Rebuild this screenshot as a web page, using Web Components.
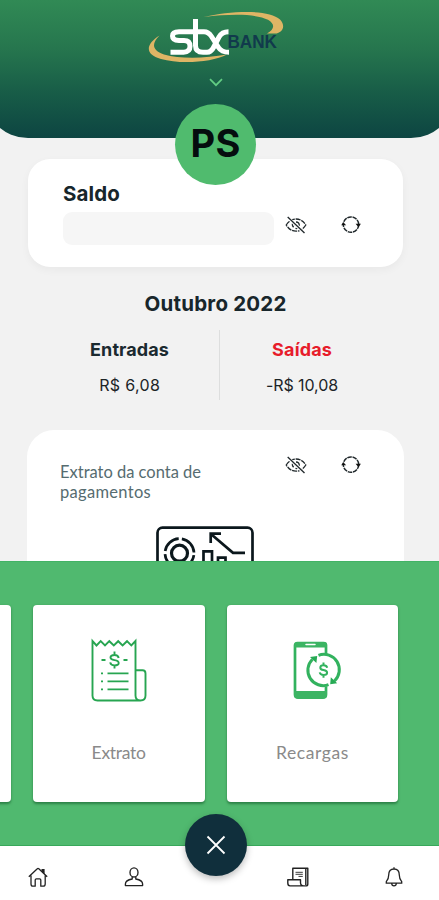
<!DOCTYPE html>
<html lang="pt-BR">
<head>
<meta charset="utf-8">
<title>STX Bank</title>
<style>
html,body{margin:0;padding:0;height:900px;overflow:hidden;background:#f2f2f2}
body{font-family:Inter,"Liberation Sans",sans-serif;color:#18252a}
</style>
</head>
<body>
<bank-app></bank-app>
<script>
const define = (name, html, setup) => customElements.define(name, class extends HTMLElement {
  connectedCallback() {
    if (this.shadowRoot) return;
    const t = document.createElement('template');
    t.innerHTML = html;
    this.attachShadow({mode: 'open'}).append(t.content.cloneNode(true));
    if (setup) setup(this, this.shadowRoot);
  }
});

/* One line of text whose tracking is adjusted to fill the width in "w". */
define('track-text', `<style>
:host{display:block;white-space:nowrap}
span{display:inline-block}
</style><span><slot></slot></span>`, (el, root) => {
  const s = root.querySelector('span');
  const nodes = root.querySelector('slot').assignedNodes({flatten: true});
  const n = nodes.map(x => x.textContent).join('').trim().length;
  if (!n) return;
  const w = +el.getAttribute('w');
  const gap = (w - s.getBoundingClientRect().width) / n;
  s.style.letterSpacing = gap.toFixed(3) + 'px';
  s.style.marginRight = (-gap).toFixed(3) + 'px';
});

const icons = {
  hidden: `<svg width="22" height="18" viewBox="0 0 22 18" fill="none" stroke="#20282b" stroke-width="1.3"><path d="M1.2 9Q5 3 11 3T20.8 9Q17 15.2 11 15.2T1.2 9Z" stroke-dasharray="5 .8"/><path d="M8 6.5Q6.5 9 8.6 11.3M11 6Q14.5 6 14.3 9.8M10.5 12.4Q12.6 12.8 13.6 11.6M10.7 8.2Q9.6 8.6 10 9.9"/><path d="M2.5 1.2 19 16.8" stroke="#fff" stroke-width="3"/><path d="M2.7 1 19.5 17"/></svg>`,
  refresh: `<svg width="20" height="18" viewBox="0 0 20 18" fill="none" stroke="#20282b" stroke-width="1.5"><circle cx="10" cy="8.6" r="7.7" stroke-dasharray="4.6 .776"/><path d="m.2 9.3 2-3.1 3 3.1ZM14.6 7.8h5.3l-2.4 3.4Z" fill="#111" stroke="none"/></svg>`,
  home: `<svg width="20" height="20" viewBox="0 0 20 20" fill="none" stroke="#222" stroke-width="1.3" stroke-linejoin="round"><path d="M.8 9.8 9.3 1.7Q10 1 10.8 1.7L19.2 9.8M3 8.5V17Q3 19.2 5 19.2H7.2V13Q7.2 11.8 8.4 11.8H11.6Q12.8 11.8 12.8 13V19.2H15Q17.2 19.2 17.2 17V8.5"/><path d="M13.5 2H16.6V7L13.5 4.2Z" fill="#222" stroke="none"/></svg>`,
  user: `<svg width="20" height="20" viewBox="0 0 20 20" fill="none" stroke="#222" stroke-width="1.35" stroke-linejoin="round"><ellipse cx="10" cy="5.4" rx="4" ry="4.6"/><path d="M8.2 9.6V12Q1.4 13.2 1.4 17V18.6H18.6V17Q18.6 13.2 11.8 12V9.6"/></svg>`,
  scroll: `<svg width="22" height="20" viewBox="0 0 22 20" fill="none" stroke="#222" stroke-width="1.4" stroke-linejoin="round"><path d="M5.8 12V1.2H20.8V17Q20.8 18.9 19 18.9H3Q.8 18.8.8 16V12.8H13.5V15.5Q13.5 18.9 16.8 18.9M18.8 1.5V18"/><path d="M8.5 5.3H15.8M8.5 7.3H15.8M11.5 9.4H15.8" stroke-width=".9"/></svg>`,
  bell: `<svg width="18" height="20" viewBox="0 0 18 20" fill="none" stroke="#222" stroke-width="1.3"><path d="M9 .2V2M3.7 8Q3.7 2 9 2T14.3 8C14.3 12 15.2 13 16.7 14.6V16.2H1.3V14.6C2.8 13 3.7 12 3.7 8ZM6.7 16.5Q6.8 18.8 9 18.8T11.3 16.5"/></svg>`,
  receipt: `<svg width="56" height="63" viewBox="0 0 56 63" fill="none" stroke="#27a551" stroke-width="1.9"><path d="M1.5 57V2L5.5 6.5 9.7 2.2 14 6.5 18.3 2.2 22.8 6.5 27.2 2.2 31.6 6.5 36 2.2 40.3 6.5 44.5 2V56.5Q44.5 61.5 49.5 61.5T54.5 56.5V34.5Q54.5 31.3 51.5 31.3H44.5M1.5 56.5Q1.5 61.5 6.5 61.5H49.5"/><path d="M10.5 21H14.5M32.5 21H36.5" stroke-width="2"/><path d="M16.5 34.4H37.5M16.5 42.4H37.5M16.5 50.4H37.5M10 34.4H12M10 42.4H12M10 50.4H12"/><path d="M23.5 12.5V16M23.5 26V29.5M27.7 19Q27.2 16 23.5 16 19.5 16 19.5 18.6 19.5 20.6 23.5 21.1 27.7 21.6 27.7 24 27.7 26.4 23.5 26.4 19.7 26.4 19.2 23.4"/></svg>`,
  phone: `<svg width="48" height="58" viewBox="0 0 48 58" fill="none" stroke="#32b25e"><path d="M33 13V4Q33 2 30.5 2H4.5Q2 2 2 4.5V53.5Q2 56 4.5 56H30.5Q33 56 33 53.5V45" stroke-width="2.7"/><path d="M1 5Q1 1 5 1H30Q34 1 34 5V6.5H1ZM1 50H34V54Q34 58 30 58H5Q1 58 1 54Z" fill="#3cb463" stroke="none"/><path d="M13 3.5H22" stroke="#fff" stroke-width="1.5" stroke-linecap="round"/><circle cx="30.5" cy="29" r="16.5" fill="#fff" stroke="none"/><path d="M25.5 14.3A15.4 15.4 0 0 1 41.4 40M35.5 43.7A15.4 15.4 0 0 1 19.5 18.2" stroke-width="3"/><path d="M17 16 24.2 15 23.4 22ZM44.2 42.2 37.2 43.2 37.8 36.2Z" fill="#27aa54" stroke="none"/><path d="M30.5 21.5V24.5M30.5 33.7V36.7M34.2 26.8Q33.6 24.3 30.5 24.3 27.3 24.3 27.3 26.7 27.3 28.5 30.5 29.1 34.1 29.7 34.1 31.8 34.1 34 30.5 34 27.3 34 26.7 31.4" stroke-width="2"/></svg>`,
  chart: `<svg width="99" height="62" viewBox="0 0 99 62" fill="none" stroke="#0b171c" stroke-width="2.7"><rect x="1.5" y="1.7" width="95" height="70" rx="5"/><circle cx="23.5" cy="27.2" r="14.5" stroke-dasharray="19.5 3.28" stroke-dashoffset="-2"/><circle cx="23.5" cy="27.2" r="8" stroke-width="3.2"/><path d="M47.5 50V25.3H56V50M62 50V31.7H69.5V50M54.7 17V7.7H65M55.5 8.5 77 26.8H89"/></svg>`
};
define('bank-icon', `<style>:host{display:block;flex:none}svg{display:block;overflow:visible}</style>`, (el, root) => {
  root.append(document.createRange().createContextualFragment(icons[el.getAttribute('name')]));
});

define('bank-logo', `<style>:host{display:block;width:136px;height:52px}svg{display:block}</style>
<svg width="136" height="52" viewBox="0 0 136 52">
<path d="M11.5 24.5C-2 33-4 43 13 48 32 53.5 64 51.5 79 43.5 57 47.5 32 48 16 43.5 3 39 4 32 11.5 24.5Z" fill="#deb565"/>
<path d="M55.5 6C83-.3 121-2 132 8.5 139 16 133 22.5 127 22.5L119 22.5C127 18 127 13 120 8.8 109 2.8 83 2.8 55.5 6Z" fill="#deb565"/>
<path d="M43 20.8H31Q24.5 20.8 24.5 25T31 29.5H36Q42 29.5 42 35.3T35.5 41.3H22.5M47.5 8V34.5Q47.5 41.3 55 41.3H59Q63 41.3 65.5 36.5L71 26Q74 20.8 80.5 20.8M43 20.8H56Q60.5 20.8 63.5 25.5L70.5 36.5Q73.5 41.3 81 41.3" fill="none" stroke="#fff" stroke-width="5"/>
<text x="79.5" y="37.3" textLength="49.5" lengthAdjust="spacingAndGlyphs" font-family="Liberation Sans,sans-serif" font-weight="700" font-size="18" fill="#113a4c">BANK</text>
</svg>`);

define('bank-header', `<style>
:host{display:block;position:relative;z-index:1;height:138px}
.bg{height:138px;margin:0 -16px;border-radius:0 0 44px 44px;background:linear-gradient(#318a55 0,#26764e 35%,#175b47 69%,#0d4542 100%);display:flex;flex-direction:column;align-items:center;box-sizing:border-box;padding:11px 24px 0 16px}
.chev{margin-top:15px}
.avatar{position:absolute;left:175px;top:104px;width:81px;height:81px;border-radius:50%;background:#50bb6e;display:grid;place-items:center;font:700 38px/42px Inter,sans-serif;color:#050d0e;box-sizing:border-box;padding-bottom:3px}
</style><div class="bg"><bank-logo></bank-logo><svg class="chev" width="16" height="9" viewBox="0 0 16 9" fill="none" stroke="#62cd83" stroke-width="1.7"><path d="m2 1.2 6 6 6-6"/></svg></div>
<div class="avatar"><track-text w="50"><slot></slot></track-text></div>`);

define('balance-card', `<style>
:host{display:block;box-sizing:border-box;height:108px;margin:21px 0 0 28px;width:375px;border-radius:22px;background:#fff;box-shadow:0 3px 9px rgba(0,0,0,.045);padding:23px 41px 0 35px}
h2{font:700 20.5px/24px Inter,sans-serif;margin:0;color:#17262b}
.row{display:flex;align-items:center;margin-top:6px}
.mask{width:211px;height:33px;border-radius:9px;background:#f6f6f6;margin-right:11px}
.row bank-icon{margin-top:-7px}
.row bank-icon:last-child{margin-left:34px}
</style><h2><track-text w="57"><slot></slot></track-text></h2>
<div class="row"><div class="mask"></div><bank-icon name="hidden"></bank-icon><bank-icon name="refresh"></bank-icon></div>`);

define('flow-total', `<style>
:host{display:flex;flex-direction:column;align-items:center}
.t{font:700 18px/24px Inter,sans-serif;color:var(--tone,#1b2a30)}
.v{font:400 16px/22px Inter,sans-serif;color:#1c2427;margin-top:12px}
</style><div class="t"><slot name="title"></slot></div><div class="v"><slot></slot></div>`);

define('month-summary', `<style>
:host{display:flex;flex-direction:column;align-items:center;width:431px;margin-top:25px}
h2{font:700 20.5px/24px Inter,sans-serif;margin:0;color:#18262b}
.cols{display:flex;margin:14px 0 0 -7px;height:70px}
.cols ::slotted(*){padding-top:8px}
.cols ::slotted([slot=in]){width:179px}
.cols ::slotted([slot=out]){width:164px}
i{width:1px;background:#dddede;height:70px}
</style><h2><track-text w="142"><slot name="month"></slot></track-text></h2><div class="cols"><slot name="in"></slot><i></i><slot name="out"></slot></div>`);

define('statement-card', `<style>
:host{display:block;box-sizing:border-box;width:377px;height:180px;margin:30px 0 0 27px;background:#fff;border-radius:27px;padding:26px 42px 0 33px}
.top{display:flex;align-items:flex-start;height:70px}
.txt{width:225px;padding-top:6px;font:400 16.5px/20px Lato,sans-serif;color:#566c70}
.txt ::slotted(*){display:block}
.top bank-icon:last-child{margin-left:34px}
.pic{margin:0 0 0 96px}
</style><div class="top"><div class="txt"><slot></slot></div><bank-icon name="hidden"></bank-icon><bank-icon name="refresh"></bank-icon></div><bank-icon class="pic" name="chart"></bank-icon>`);

define('action-tile', `<style>
:host{display:flex;flex-direction:column;align-items:center;box-sizing:border-box;flex:0 0 171.5px;height:197px;border-radius:4px;background:#fff;box-shadow:0 1.5px 2.5px rgba(0,60,20,.45);padding-top:34px}
.i{height:72px;display:flex;align-items:flex-start}
.l{font:400 17.5px/24px Lato,sans-serif;color:#8a8a8a;margin-top:30px}
</style><div class="i"><slot name="icon"></slot></div><div class="l"><slot></slot></div>`);

define('action-tray', `<style>
:host{display:flex;box-sizing:border-box;gap:22px;height:285px;background:#50b96f;border-top:1px solid #42b365;border-bottom:1.5px solid #38a85a;padding-top:43px;overflow:hidden}
::slotted(:first-child){margin-left:-160.5px}
</style><slot></slot>`);

define('bottom-nav', `<style>
:host{display:flex;position:relative;height:54px;background:#fff;box-sizing:border-box;padding:21px 36px 0 28px}
.u{margin-left:76px}.s{margin-left:143px}.b{margin-left:76px}
button{position:absolute;left:185px;top:-32px;width:62px;height:62px;border:0;border-radius:50%;background:#102f3c;box-shadow:0 3px 7px rgba(0,0,0,.26);display:grid;place-items:center;padding:0}
</style><bank-icon name="home"></bank-icon><bank-icon class="u" name="user"></bank-icon><bank-icon class="s" name="scroll"></bank-icon><bank-icon class="b" name="bell"></bank-icon>
<button aria-label="Fechar"><svg width="20" height="20" viewBox="0 0 20 20" stroke="#fff" stroke-width="1.8"><path d="m1.5 1.5 17 17m0-17-17 17"/></svg></button>`);

define('bank-app', `<style>
:host{display:grid;grid-template-rows:138px 423px 285px 54px;grid-template-columns:439px;width:439px;height:900px;overflow:hidden;background:#f2f2f2}
main{overflow:hidden}
</style>
<bank-header>PS</bank-header>
<main>
<balance-card>Saldo</balance-card>
<month-summary><span slot="month">Outubro 2022</span>
<flow-total slot="in"><track-text w="79" slot="title">Entradas</track-text><track-text w="61">R$ 6,08</track-text></flow-total>
<flow-total slot="out" style="--tone:#e71c2b"><track-text w="60" slot="title">Saídas</track-text><track-text w="72">-R$ 10,08</track-text></flow-total>
</month-summary>
<statement-card><track-text w="141">Extrato da conta de</track-text><track-text w="91">pagamentos</track-text></statement-card>
</main>
<action-tray><action-tile></action-tile>
<action-tile><bank-icon slot="icon" name="receipt"></bank-icon><track-text w="54">Extrato</track-text></action-tile>
<action-tile><bank-icon slot="icon" name="phone" style="margin:2px 0 0 9px"></bank-icon><track-text w="73">Recargas</track-text></action-tile>
</action-tray>
<bottom-nav></bottom-nav>`);

</script>
</body>
</html>
